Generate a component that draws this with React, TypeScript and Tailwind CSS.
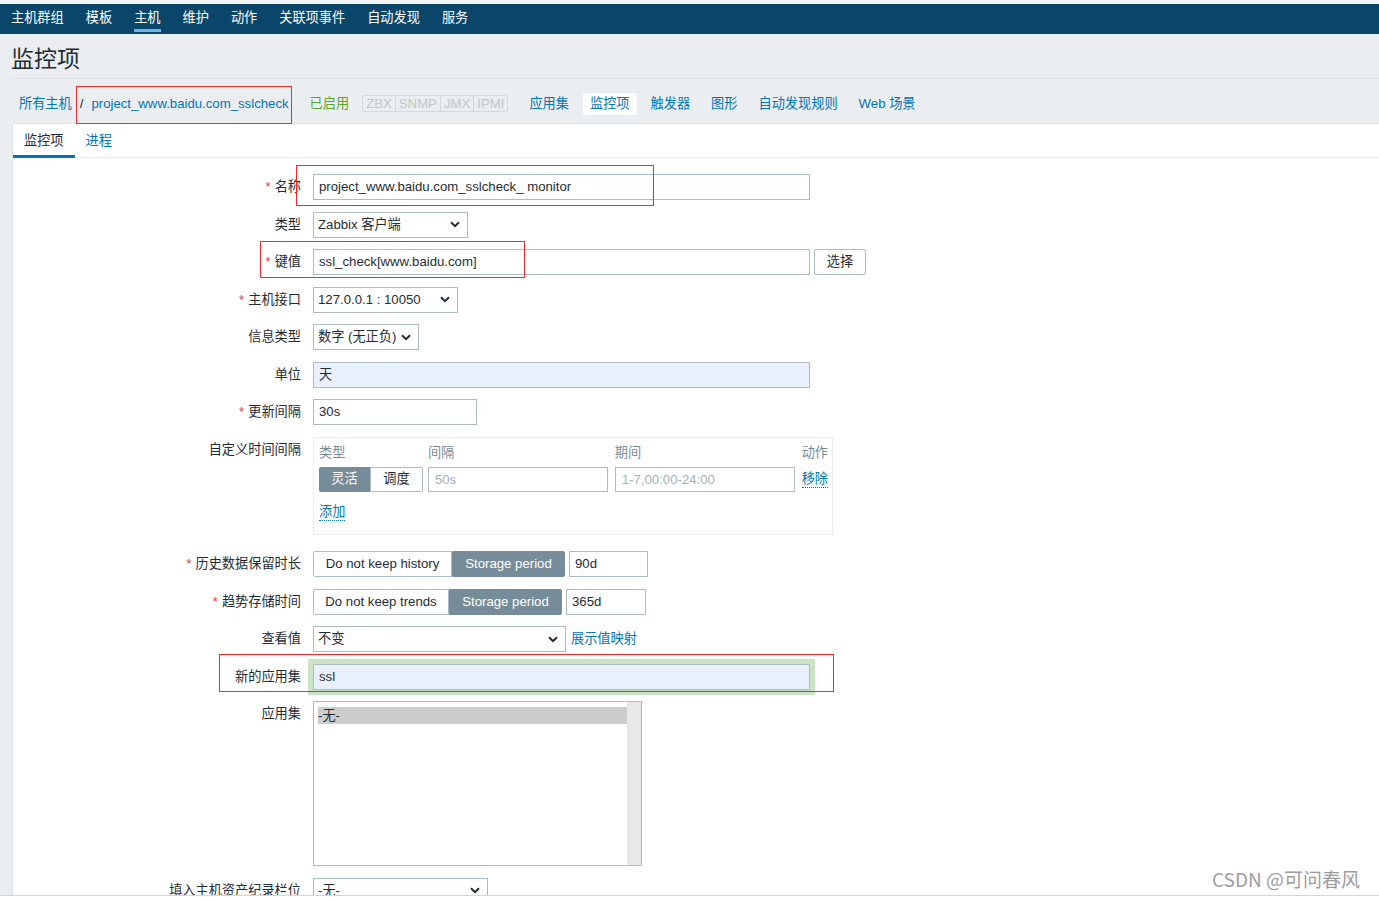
import React from "react";

const navItems = ["主机群组", "模板", "主机", "维护", "动作", "关联项事件", "自动发现", "服务"];
const hostTabs = ["应用集", "监控项", "触发器", "图形", "自动发现规则", "Web 场景"];
const badges = ["ZBX", "SNMP", "JMX", "IPMI"];

function Chevron() {
  return (
    <svg width="10" height="7" viewBox="0 0 10 7" className="shrink-0">
      <path d="M1 1.2 L5 5.2 L9 1.2" fill="none" stroke="#1f2c33" strokeWidth="2" />
    </svg>
  );
}

function Row({
  label,
  required,
  children,
  className = "",
}: {
  label: string;
  required?: boolean;
  children: React.ReactNode;
  className?: string;
}) {
  return (
    <div className={`flex items-start ${className}`}>
      <div className="w-[288px] shrink-0 whitespace-nowrap text-right leading-[25px] text-[#1f2c33]">
        {required && <span className="mr-[4px] text-[#e33734]">*</span>}
        {label}
      </div>
      <div className="ml-[12px] flex items-center">{children}</div>
    </div>
  );
}

function Field({ className = "", children }: { className?: string; children?: React.ReactNode }) {
  return (
    <div className={`h-[26px] border border-[#acbbc4] px-[5px] leading-[24px] whitespace-nowrap ${className}`}>
      {children}
    </div>
  );
}

function Select({ className = "", value }: { className?: string; value: string }) {
  return (
    <div
      className={`flex h-[26px] items-center justify-between border border-[#acbbc4] bg-white pl-[4px] pr-[7px] whitespace-nowrap ${className}`}
    >
      <span>{value}</span>
      <Chevron />
    </div>
  );
}

function Segmented({ off, offW, onW }: { off: string; offW: string; onW: string }) {
  return (
    <div className="flex h-[26px]">
      <div className={`flex items-center justify-center rounded-l-[2px] border border-[#acbbc4] bg-white ${offW}`}>
        {off}
      </div>
      <div className={`flex items-center justify-center rounded-r-[2px] border border-[#768d99] bg-[#768d99] text-white ${onW}`}>
        Storage period
      </div>
    </div>
  );
}

export default function App() {
  return (
    <div className="relative h-[897px] w-[1379px] overflow-hidden bg-white font-['Liberation_Sans','Noto_Sans_CJK_SC',sans-serif] text-[13.2px] text-[#1f2c33]">
      <div className="flex h-[895px] flex-col overflow-hidden bg-[#ebeef0]">
        <div className="h-[4px] shrink-0 bg-[#f3f4f5]" />

        {/* top menu */}
        <nav className="flex h-[30px] shrink-0 items-stretch gap-[22px] bg-[#0a466a] pb-[2px] pl-[11px]">
          {navItems.map((item) => (
            <div key={item} className="relative flex items-center text-white">
              {item}
              {item === "主机" && (
                <span className="absolute bottom-0 left-0 right-0 h-[3px] bg-[#6db3e4]" />
              )}
            </div>
          ))}
        </nav>

        {/* title */}
        <div className="ml-[11px] flex h-[45px] shrink-0 items-center border-b border-[#dfe4e7] pt-[7px] text-[23px] leading-none">
          监控项
        </div>

        {/* host breadcrumbs */}
        <div className="flex h-[44px] shrink-0 items-center pl-[19px] pt-[5px] whitespace-nowrap">
          <span className="text-[#0275b8]">所有主机</span>
          <span className="mx-[8px]">/</span>
          <span className="text-[#0275b8]">project_www.baidu.com_sslcheck</span>
          <span className="ml-[21px] text-[#5aa52e]">已启用</span>
          <div className="ml-[13px] flex rounded-[2px] border border-[#d3d9dc] text-[#c1c8cb]">
            {badges.map((b, i) => (
              <span
                key={b}
                className={`px-[3px] leading-[15px] ${i < badges.length - 1 ? "border-r border-[#d3d9dc]" : ""}`}
              >
                {b}
              </span>
            ))}
          </div>
          <div className="ml-[14px] flex gap-[7px]">
            {hostTabs.map((t) => (
              <span
                key={t}
                className={`flex h-[22px] items-center rounded-[2px] px-[7px] text-[#0275b8] ${
                  t === "监控项" ? "bg-white" : ""
                }`}
              >
                {t}
              </span>
            ))}
          </div>
        </div>

        {/* content panel */}
        <div className="ml-[12px] flex flex-1 flex-col border-l border-t border-[#dfe4e7] bg-white">
          <div className="flex h-[34px] shrink-0 border-b border-[#ebeef0]">
            <div className="relative flex items-center px-[11px]">
              监控项
              <span className="absolute bottom-[-1px] left-0 right-0 h-[3px] bg-[#0275b8]" />
            </div>
            <div className="flex items-center px-[11px] text-[#0275b8]">进程</div>
          </div>

          <div className="flex flex-col gap-[11.5px] pt-[16px]">
            <Row label="名称" required>
              <Field className="w-[497px]">project_www.baidu.com_sslcheck_ monitor</Field>
            </Row>

            <Row label="类型">
              <Select className="w-[155px]" value="Zabbix 客户端" />
            </Row>

            <Row label="键值" required>
              <Field className="w-[497px]">ssl_check[www.baidu.com]</Field>
              <div className="ml-[4px] flex h-[26px] w-[52px] items-center justify-center rounded-[2px] border border-[#acbbc4] bg-white">
                选择
              </div>
            </Row>

            <Row label="主机接口" required>
              <Select className="w-[145px]" value="127.0.0.1 : 10050" />
            </Row>

            <Row label="信息类型">
              <Select className="w-[106px]" value="数字 (无正负)" />
            </Row>

            <Row label="单位">
              <Field className="w-[497px] bg-[#e8f0fe]">天</Field>
            </Row>

            <Row label="更新间隔" required>
              <Field className="w-[164px]">30s</Field>
            </Row>

            <Row label="自定义时间间隔" className="mb-[5px]">
              <div className="w-[520px] border border-[#ebeef0] pb-[12px] pl-[5px] pr-[4px] pt-[6px]">
                <div className="flex h-[18px] items-center text-[#768d99]">
                  <div className="w-[109px]">类型</div>
                  <div className="w-[187px]">间隔</div>
                  <div className="w-[187px]">期间</div>
                  <div>动作</div>
                </div>
                <div className="mt-[5px] flex items-center">
                  <div className="flex h-[25px] w-[104px]">
                    <div className="flex w-[51px] items-center justify-center rounded-l-[2px] bg-[#768d99] text-white">
                      灵活
                    </div>
                    <div className="flex flex-1 items-center justify-center rounded-r-[2px] border border-[#acbbc4]">
                      调度
                    </div>
                  </div>
                  <div className="ml-[5px] h-[25px] w-[180px] border border-[#acbbc4] px-[6px] leading-[23px] text-[#a3b0b8]">
                    50s
                  </div>
                  <div className="ml-[7px] h-[25px] w-[180px] border border-[#acbbc4] px-[6px] leading-[23px] text-[#a3b0b8]">
                    1-7,00:00-24:00
                  </div>
                  <span className="ml-[7px] border-b border-dotted border-[#0275b8] leading-[16px] text-[#0275b8]">
                    移除
                  </span>
                </div>
                <div className="mt-[12px] flex h-[18px] items-center">
                  <span className="border-b border-dotted border-[#0275b8] leading-[16px] text-[#0275b8]">
                    添加
                  </span>
                </div>
              </div>
            </Row>

            <Row label="历史数据保留时长" required>
              <Segmented off="Do not keep history" offW="w-[139px]" onW="w-[113px]" />
              <Field className="ml-[4px] w-[79px]">90d</Field>
            </Row>

            <Row label="趋势存储时间" required>
              <Segmented off="Do not keep trends" offW="w-[136px]" onW="w-[113px]" />
              <Field className="ml-[4px] w-[80px]">365d</Field>
            </Row>

            <Row label="查看值">
              <Select className="w-[253px]" value="不变" />
              <span className="ml-[5px] text-[#0275b8]">展示值映射</span>
            </Row>

            <Row label="新的应用集">
              <Field className="w-[497px] bg-[#e8f0fe] shadow-[0_0_0_5px_#c9e3c4]">ssl</Field>
            </Row>

            <Row label="应用集">
              <div className="flex h-[165px] w-[329px] border border-[#acbbc4]">
                <div className="flex-1 pl-[4px] pt-[5px]">
                  <div className="h-[17px] bg-[#cdcdcd] leading-[17px]">-无-</div>
                </div>
                <div className="w-[14px] bg-[#e8e8e8]" />
              </div>
            </Row>

            <Row label="填入主机资产纪录栏位">
              <Select className="w-[175px]" value="-无-" />
            </Row>
          </div>
        </div>
      </div>
      <div className="h-[1px] bg-[#d6d6d6]" />

      {/* screenshot annotations */}
      <div className="absolute left-[76px] top-[86px] h-[38px] w-[216px] border border-[#ee2a2a]" />
      <div className="absolute left-[296px] top-[165px] h-[41px] w-[358px] border border-[#ee2a2a]" />
      <div className="absolute left-[260px] top-[241px] h-[37px] w-[265px] border border-[#ee2a2a]" />
      <div className="absolute left-[219px] top-[654px] h-[38px] w-[615px] border border-[#ee2a2a]" />

      <div className="absolute left-[1212px] top-[866px] font-['Noto_Sans_CJK_SC',sans-serif] text-[19px] leading-[26px] text-[#9d9d9d]">
        CSDN @可问春风
      </div>
    </div>
  );
}
